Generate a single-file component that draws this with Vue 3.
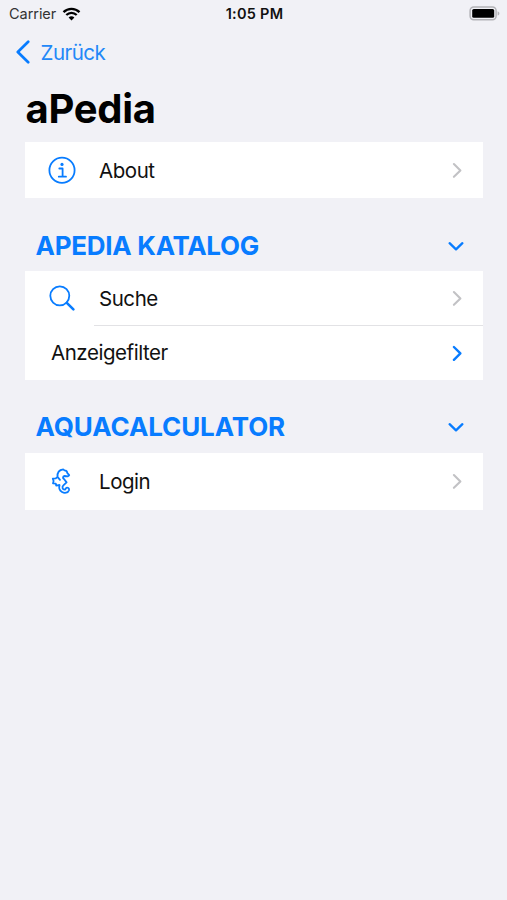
<script setup>
import { ref } from 'vue'

const sections = ref([
  { id: 'info', title: '', open: true, rows: [{ label: 'About', icon: 'info' }] },
  {
    id: 'katalog',
    title: 'APEDIA KATALOG',
    open: true,
    rows: [{ label: 'Suche', icon: 'search' }, { label: 'Anzeigefilter', icon: '', accent: true }],
  },
  { id: 'aqua', title: 'AQUACALCULATOR', open: true, rows: [{ label: 'Login', icon: 'seahorse' }] },
])
</script>

<template>
  <div class="screen">
    <header class="status">
      <div class="carrier">
        <span class="carrier-name">Carrier</span>
        <svg class="wifi" viewBox="0 0 18 14" width="19" height="14">
          <path d="M1 5.1C5.5.7 12.5.7 17 5.1" />
          <path d="M3.8 8C6.8 5.1 11.2 5.1 14.2 8" />
          <path class="solid" d="M9 13.4 6.1 10.4C7.8 8.9 10.2 8.9 11.9 10.4Z" />
        </svg>
      </div>
      <span class="time">1:05 PM</span>
      <svg class="battery" viewBox="0 0 31 15" width="31" height="15">
        <rect class="shell" x="1.1" y="1.1" width="26" height="12.6" rx="3.6" />
        <rect class="charge" x="3.2" y="3" width="22" height="8.8" rx="1.6" />
        <path class="cap" d="M28.6 5.2C31 6 31 8.8 28.6 9.6Z" />
      </svg>
    </header>

    <nav class="nav">
      <svg class="back" viewBox="0 0 16 24" width="16" height="24">
        <path d="M13.2 1.8 2.8 12 13.2 22.2" />
      </svg>
      <span class="back-label">Zurück</span>
    </nav>

    <h1 class="title">aPedia</h1>

    <section v-for="s in sections" :key="s.id" :class="['section', s.id]">
      <div v-if="s.title" class="section-head" @click="s.open = !s.open">
        <h2 class="section-title">{{ s.title }}</h2>
        <svg class="toggle" viewBox="0 0 16 10" width="16" height="10">
          <path d="M1.6 2.2 8 8.4 14.4 2.2" />
        </svg>
      </div>
      <div v-if="s.open" class="card">
        <div v-for="r in s.rows" :key="r.label" class="row">
          <div v-if="r.icon" class="icon">
            <svg v-if="r.icon === 'info'" viewBox="0 0 28 28" width="28" height="28">
              <circle cx="14" cy="14.3" r="12.6" />
              <circle class="dot" cx="14" cy="8.4" r="1.6" />
              <path d="M11.3 12.5H14.6V20.5M10.8 20.7H18" />
            </svg>
            <svg v-else-if="r.icon === 'search'" viewBox="0 0 28 28" width="28" height="28">
              <circle cx="11.8" cy="11.8" r="9.5" />
              <path class="handle" d="M18.8 18.8 25.4 25.4" />
            </svg>
            <svg v-else class="seahorse" viewBox="0 0 28 28" width="28" height="28">
              <path d="M12 12.8 9.5 9.8C9.2 5.8 11.4 2.9 15.2 2.4L16.5 3.4C18.5 3.6 19.3 5 19.4 6.2L21.2 8.2 19.8 9.4 16.6 9C14.6 9.4 14.6 11 16 12L18.6 15.4 15.6 18.2C13.6 20 14.4 22.8 17 22.6L18.4 20.8C20 20.4 21.5 21.4 21 23.2 20 26 16.5 26.4 14 25 11.2 23.4 10.6 21 11.6 18L8.2 18.6 7.8 16.6 5 16.4 5.6 14 4.8 11.6 7.8 11.4 9.5 9.8" />
            </svg>
          </div>
          <span class="label">{{ r.label }}</span>
          <svg :class="['chevron', { accent: r.accent }]" viewBox="0 0 10 16" width="10" height="16">
            <path d="M1.9 2 8.4 8.4 1.9 14.8" />
          </svg>
        </div>
      </div>
    </section>
  </div>
</template>

<style>
body {
  background: #f1f1f6;
}
</style>

<style scoped>
.screen {
  width: 507px;
  height: 900px;
  overflow: hidden;
  background: #f1f1f6;
  color: #111;
  font-family: Inter, 'Liberation Sans', sans-serif;
}
svg {
  display: block;
  flex: none;
  fill: none;
  stroke: #087cff;
  stroke-linecap: round;
  stroke-linejoin: round;
}
.status {
  display: grid;
  grid-template-columns: 1fr auto 1fr;
  align-items: center;
  height: 27px;
  padding: 0 7px 0 9px;
  font-size: 14.5px;
}
.carrier {
  display: flex;
  align-items: center;
  gap: 5.5px;
}
.carrier-name {
  color: #333;
  letter-spacing: -0.05px;
}
.wifi {
  stroke: #000;
  stroke-width: 2.3;
  stroke-linecap: butt;
}
.wifi .solid {
  fill: #000;
  stroke: none;
}
.time {
  font-weight: 600;
  letter-spacing: 0.25px;
}
.battery {
  justify-self: end;
}
.shell {
  stroke: #b3b3b7;
  stroke-width: 1.5;
}
.charge {
  fill: #000;
  stroke: none;
}
.cap {
  fill: #b3b3b7;
  stroke: none;
}
.nav {
  display: flex;
  align-items: center;
  gap: 9.5px;
  height: 50px;
  padding-left: 15px;
}
.back {
  stroke-width: 2.7;
}
.back-label {
  color: #2388f8;
  font-size: 20.5px;
  letter-spacing: -0.5px;
}
.title {
  margin: 0;
  padding: 7px 0 0 25.5px;
  height: 65px;
  box-sizing: border-box;
  line-height: 50px;
  font-size: 40px;
  letter-spacing: -0.3px;
  font-weight: 700;
  color: #000;
}
.section {
  padding: 0 24px 0 25px;
}
.section-head {
  display: flex;
  align-items: center;
  justify-content: space-between;
  padding: 22px 19px 0 10.5px;
  height: 51px;
}
.section-title {
  margin: 0;
  font-size: 26px;
  line-height: 32px;
  letter-spacing: -0.28px;
  font-weight: 700;
  color: #087cff;
}
.aqua .section-title {
  letter-spacing: -0.1px;
}
.toggle {
  stroke-width: 2.3;
  overflow: visible;
}
.card {
  background: #fff;
}
.row {
  display: flex;
  align-items: center;
  height: 56px;
  padding: 0 21px 0 26px;
  position: relative;
}
.katalog .row {
  height: 54.5px;
}
.katalog .row + .row {
  height: 54px;
}
.katalog .row + .row::before {
  content: '';
  position: absolute;
  top: -0.6px;
  left: 69px;
  right: 0;
  height: 1px;
  background: #e2e2e5;
}
.aqua .row {
  height: 57px;
}
.icon {
  width: 48px;
  margin-left: -3px;
  padding-right: 3px;
  box-sizing: border-box;
}
.icon svg {
  stroke-width: 1.8;
}
.icon .dot {
  fill: #087cff;
  stroke: none;
}
.icon .handle {
  stroke-width: 2.6;
}
.icon .seahorse {
  stroke-width: 1.8;
}
.label {
  flex: 1;
  font-size: 20.5px;
  letter-spacing: -0.45px;
  white-space: nowrap;
}
.icon + .label {
  margin-left: 3px;
}
.chevron {
  stroke: #c2c2c5;
  stroke-width: 2.1;
  overflow: visible;
}
.chevron.accent {
  stroke: #087cff;
  stroke-width: 2.4;
}
</style>
